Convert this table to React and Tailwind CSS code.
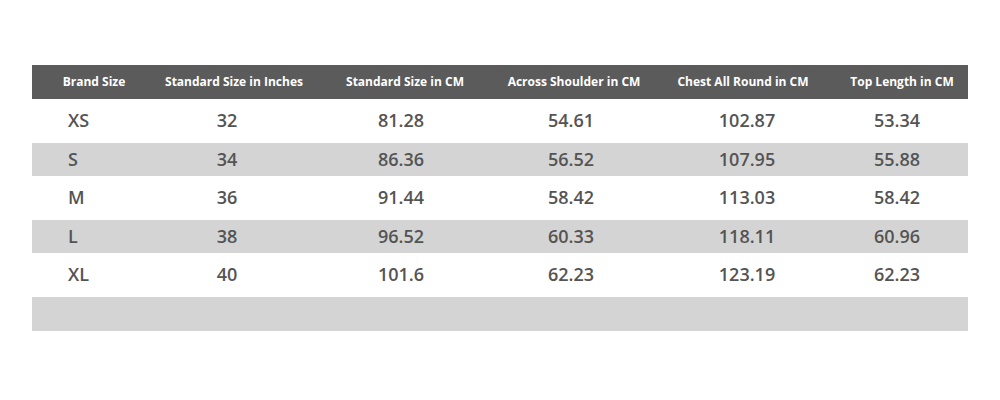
import React from "react";

const headers = [
  "Brand Size",
  "Standard Size in Inches",
  "Standard Size in CM",
  "Across Shoulder in CM",
  "Chest All Round in CM",
  "Top Length in CM",
];

const rows = [
  ["XS", "32", "81.28", "54.61", "102.87", "53.34"],
  ["S", "34", "86.36", "56.52", "107.95", "55.88"],
  ["M", "36", "91.44", "58.42", "113.03", "58.42"],
  ["L", "38", "96.52", "60.33", "118.11", "60.96"],
  ["XL", "40", "101.6", "62.23", "123.19", "62.23"],
];

export default function App() {
  return (
    <div className="w-[1000px] h-[400px] bg-white pt-[65px] px-[32px]" style={{ fontFamily: '"Open Sans", sans-serif' }}>
      <div className="w-[936px]">
        {/* header */}
        <div className="grid grid-cols-[124px_156px_186px_152px_186px_132px] h-[34px] items-center bg-[#5b5b5b] text-white text-[12px] font-bold">
          {headers.map((h) => (
            <div key={h} className="text-center">{h}</div>
          ))}
        </div>

        {rows.map((r, i) => {
          const gray = i % 2 === 1;
          return (
            <div
              key={r[0]}
              className={
                "grid grid-cols-[120px_150px_198px_142px_210px_90px_1fr] items-center text-[18px] font-semibold text-[#545454] " +
                (gray ? "bg-[#d4d4d4] h-[33.5px]" : "bg-white h-[43.5px]")
              }
            >
              <div className="pl-[36px]">{r[0]}</div>
              {r.slice(1).map((v, j) => (
                <div key={j} className="text-center">{v}</div>
              ))}
            </div>
          );
        })}
        <div className="h-[34px] bg-[#d4d4d4]"></div>
      </div>
    </div>
  );
}
